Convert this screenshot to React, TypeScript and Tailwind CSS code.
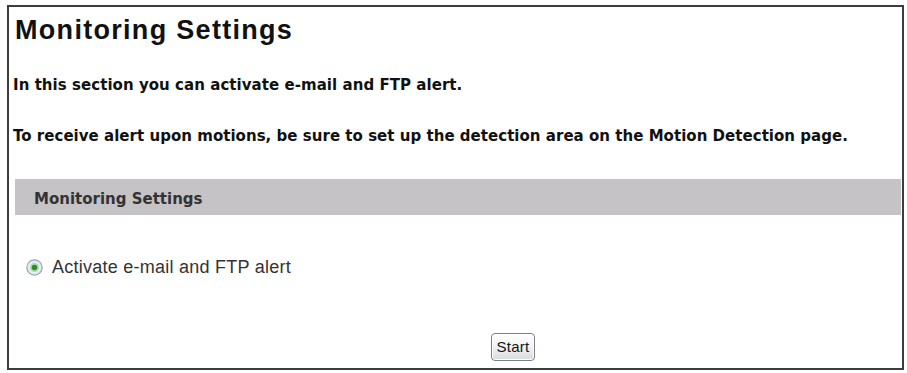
export default function App() {
  return (
    <div className="w-[907px] h-[373px] bg-white pt-[5px] pl-[7px] font-['Liberation_Sans',Arial,sans-serif]">
      <div className="w-[897px] h-[365px] border-2 border-[#3c3c3c] flex flex-col">
        {/* page title */}
        <h1 className="mt-[8px] ml-[6px] text-[27px] leading-[30px] font-bold tracking-[1.3px] text-[#111]">
          Monitoring Settings
        </h1>

        {/* intro text */}
        <p className="mt-[31px] ml-[4px] font-['DejaVu_Sans',Verdana,sans-serif] text-[15px] leading-[18px] font-bold text-[#111] tracking-[0.05px]">
          In this section you can activate e-mail and FTP alert.
        </p>
        <p className="mt-[33px] ml-[4px] font-['DejaVu_Sans',Verdana,sans-serif] text-[15px] leading-[18px] font-bold text-[#111] tracking-[0.03px]">
          To receive alert upon motions, be sure to set up the detection area on the Motion Detection page.
        </p>

        {/* section header bar */}
        <div className="mt-[34px] ml-[6px] mr-[1px] h-[36px] pt-[11px] pl-[19px] bg-[#c5c3c6]">
          <span className="block font-['DejaVu_Sans',Verdana,sans-serif] text-[15px] leading-[18px] font-bold text-[#333]">
            Monitoring Settings
          </span>
        </div>

        {/* option */}
        <label className="mt-[41px] ml-[17px] flex items-center gap-[9px] h-[22px]">
          <svg width="17" height="17" viewBox="0 0 16 16" className="shrink-0">
            <defs>
              <radialGradient id="rg" cx="50%" cy="50%" r="50%">
                <stop offset="0%" stopColor="#ffffff" />
                <stop offset="100%" stopColor="#dfe6ee" />
              </radialGradient>
            </defs>
            <circle cx="8" cy="8" r="7.2" fill="url(#rg)" stroke="#9aa8b8" strokeWidth="1.2" />
            <circle cx="8" cy="8" r="4.2" fill="#a9dca6" />
            <circle cx="8" cy="8" r="2.6" fill="#2f8a35" />
          </svg>
          <span className="text-[18px] leading-[22px] text-[#333] tracking-[0.25px]">
            Activate e-mail and FTP alert
          </span>
        </label>

        {/* action */}
        <div className="mt-[55px] ml-[482px]">
          <button className="w-[44px] h-[28px] rounded-[4px] border border-[#7b8088] bg-gradient-to-b from-white via-[#f2f2f2] to-[#d9dadd] shadow-[inset_0_0_0_1px_#ffffff] text-[15px] leading-[18px] text-[#151515] tracking-[0.3px]">
            Start
          </button>
        </div>
      </div>
    </div>
  );
}
